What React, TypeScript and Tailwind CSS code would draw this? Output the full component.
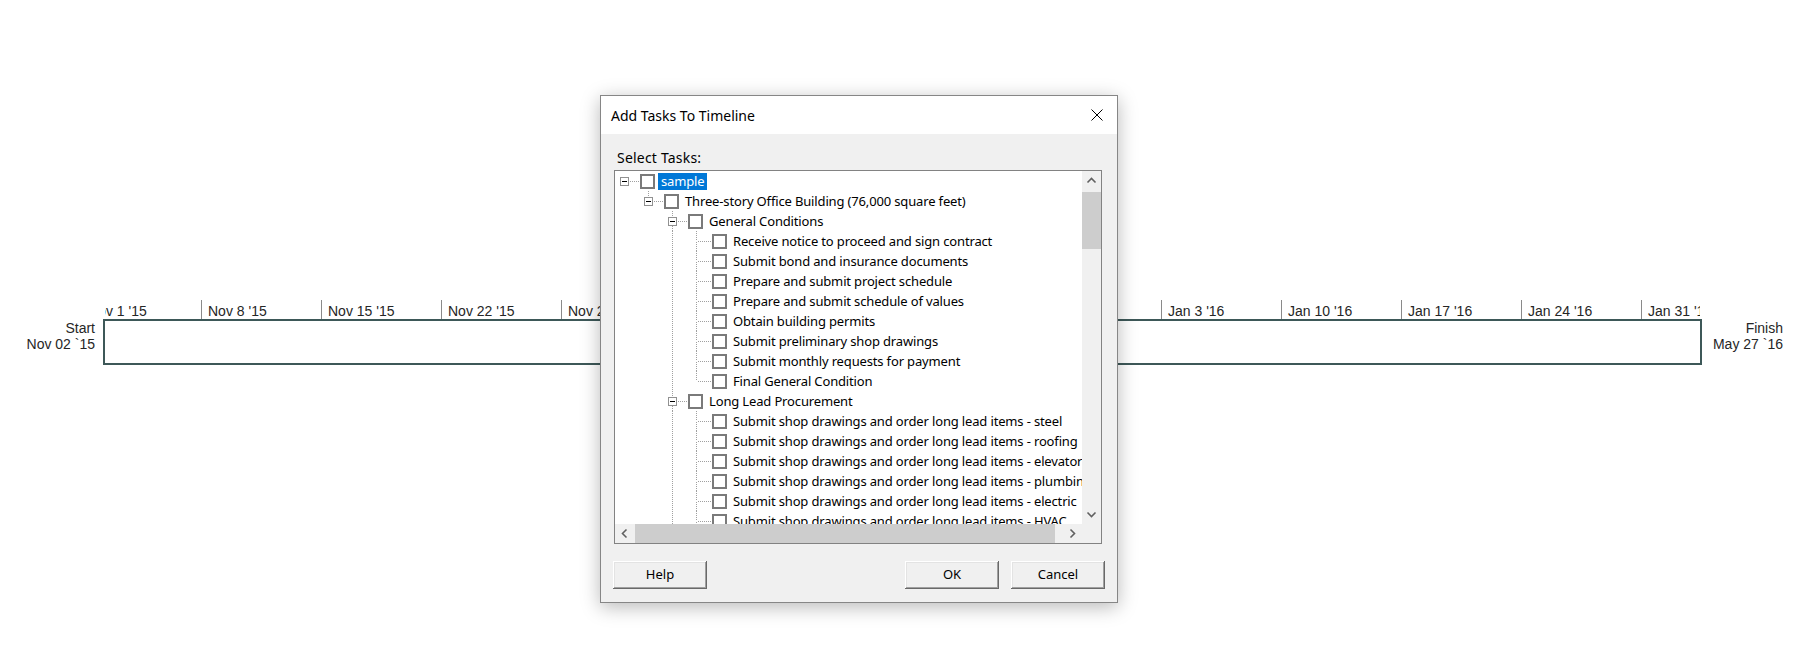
import React from 'react';

type Row = {
  level: number;
  text: string;
  exp?: boolean;
  last?: boolean;
  guides: boolean[];
  selected?: boolean;
};

const leaf = (text: string, last = false): Row => ({ level: 3, text, last, guides: [false, false, true] });

const rows: Row[] = [
  { level: 0, text: 'sample', exp: true, last: true, guides: [], selected: true },
  { level: 1, text: 'Three-story Office Building (76,000 square feet)', exp: true, last: true, guides: [false] },
  { level: 2, text: 'General Conditions', exp: true, guides: [false, false] },
  leaf('Receive notice to proceed and sign contract'),
  leaf('Submit bond and insurance documents'),
  leaf('Prepare and submit project schedule'),
  leaf('Prepare and submit schedule of values'),
  leaf('Obtain building permits'),
  leaf('Submit preliminary shop drawings'),
  leaf('Submit monthly requests for payment'),
  leaf('Final General Condition', true),
  { level: 2, text: 'Long Lead Procurement', exp: true, guides: [false, false] },
  leaf('Submit shop drawings and order long lead items - steel'),
  leaf('Submit shop drawings and order long lead items - roofing'),
  leaf('Submit shop drawings and order long lead items - elevator'),
  leaf('Submit shop drawings and order long lead items - plumbing'),
  leaf('Submit shop drawings and order long lead items - electric'),
  leaf('Submit shop drawings and order long lead items - HVAC'),
  leaf('Submit shop drawings and order long lead items - sitework', true),
];

const ticks = [
  "Nov 1 '15", "Nov 8 '15", "Nov 15 '15", "Nov 22 '15", "Nov 29 '15", "Dec 6 '15", "Dec 13 '15",
  "Dec 20 '15", "Dec 27 '15", "Jan 3 '16", "Jan 10 '16", "Jan 17 '16", "Jan 24 '16", "Jan 31 '16",
];

const DOT = '#a0a0a0';

function Guide({ on }: { on: boolean }) {
  return (
    <svg width="24" height="20" className="shrink-0">
      {on && <line x1="9.5" y1="0" x2="9.5" y2="20" stroke={DOT} strokeDasharray="1 1" />}
    </svg>
  );
}

function Branch({ row }: { row: Row }) {
  return (
    <svg width="24" height="20" className="shrink-0">
      {row.level > 0 && <line x1="9.5" y1="0" x2="9.5" y2="10" stroke={DOT} strokeDasharray="1 1" />}
      {!row.last && <line x1="9.5" y1="11" x2="9.5" y2="20" stroke={DOT} strokeDasharray="1 1" />}
      <line x1={row.exp ? 15 : 11} y1="10.5" x2="24" y2="10.5" stroke={DOT} strokeDasharray="1 1" />
      {row.exp && (
        <g>
          <rect x="5.5" y="6.5" width="8" height="8" fill="#fff" stroke="#919191" />
          <line x1="7" y1="10.5" x2="12" y2="10.5" stroke="#000" />
        </g>
      )}
    </svg>
  );
}

function TreeRow({ row }: { row: Row }) {
  return (
    <div className="flex h-[20px] items-center whitespace-nowrap">
      {row.guides.map((g, i) => (
        <Guide key={i} on={g} />
      ))}
      <Branch row={row} />
      <div className="ml-[1px] h-[15px] w-[15px] shrink-0 border-2 border-[#7a7a7a] bg-white" />
      <span
        className={`ml-[3px] px-[3px] leading-[17px] ${row.selected ? 'bg-[#0078d7] text-white' : 'text-black'}`}
      >
        {row.text}
      </span>
    </div>
  );
}

function Chevron({ dir }: { dir: 'up' | 'down' | 'left' | 'right' }) {
  const pts = {
    up: '5.5,11.5 9.5,7.5 13.5,11.5',
    down: '5.5,7.5 9.5,11.5 13.5,7.5',
    left: '11.5,5.5 7.5,9.5 11.5,13.5',
    right: '7.5,5.5 11.5,9.5 7.5,13.5',
  }[dir];
  return (
    <svg width="19" height="19" className="shrink-0">
      <polyline points={pts} fill="none" stroke="#606060" strokeWidth="1.6" />
    </svg>
  );
}

function Btn({ children, className = '' }: { children: React.ReactNode; className?: string }) {
  return (
    <button
      className={`flex h-[28px] w-[94px] items-center justify-center bg-[#f0f0f0] text-[13px] text-black shadow-[inset_-1px_-1px_#696969,inset_1px_1px_#ffffff,inset_-2px_-2px_#a0a0a0,inset_2px_2px_#e3e3e3] ${className}`}
    >
      {children}
    </button>
  );
}

export default function App() {
  return (
    <div className="relative h-[671px] w-[1803px] overflow-hidden bg-white">
      {/* timeline */}
      <div className="flex pt-[300px] font-['Liberation_Sans',Arial,sans-serif] text-[14px] leading-[16px] text-[#262626]">
        <div className="w-[103px] shrink-0 pr-[8px] pt-[20px] text-right">
          Start
          <br />
          Nov 02 `15
        </div>
        <div className="w-[1599px] shrink-0">
          <div className="mx-[2px] h-[19px] overflow-hidden">
            <div className="-ml-[24px] flex">
              {ticks.map((t) => (
                <div key={t} className="h-[19px] w-[120px] shrink-0 whitespace-nowrap border-l border-[#8a8a8a] pl-[6px] pt-[3px]">
                  {t}
                </div>
              ))}
            </div>
          </div>
          <div className="h-[46px] border-2 border-[#3d5858] bg-white" />
        </div>
        <div className="w-[81px] shrink-0 pt-[20px] text-right">
          Finish
          <br />
          May 27 `16
        </div>
      </div>

      {/* dialog */}
      <div className="absolute left-[600px] top-[95px] flex h-[508px] w-[518px] flex-col border border-[#868686] bg-[#f0f0f0] font-['Noto_Sans',sans-serif] text-black shadow-[0_4px_18px_rgba(0,0,0,0.28)]">
        <div className="flex h-[38px] shrink-0 items-center justify-between bg-white pl-[10px] pr-[14px]">
          <span className="text-[14px]">Add Tasks To Timeline</span>
          <svg width="12" height="12">
            <line x1="0.5" y1="0.5" x2="11.5" y2="11.5" stroke="#000" />
            <line x1="11.5" y1="0.5" x2="0.5" y2="11.5" stroke="#000" />
          </svg>
        </div>
        <div className="px-[12px] pt-[16px]">
          <div className="pl-[4px] text-[14px] leading-[16px] tracking-[0.2px]">Select Tasks:</div>
          <div className="ml-[1px] mt-[4px] grid h-[374px] w-[488px] grid-cols-[1fr_19px] grid-rows-[1fr_19px] border border-[#828282] bg-white">
            <div className="overflow-hidden text-[13px] tracking-[-0.15px]">
              {rows.map((r, i) => (
                <TreeRow key={i} row={r} />
              ))}
            </div>
            <div className="flex flex-col bg-[#f0f0f0]">
              <Chevron dir="up" />
              <div className="mt-[2px] h-[57px] bg-[#cdcdcd]" />
              <div className="flex-1" />
              <Chevron dir="down" />
            </div>
            <div className="flex bg-[#f0f0f0]">
              <Chevron dir="left" />
              <div className="ml-[1px] w-[420px] bg-[#cdcdcd]" />
              <div className="flex-1" />
              <Chevron dir="right" />
            </div>
            <div className="bg-[#f0f0f0]" />
          </div>
          <div className="mt-[17px] flex">
            <Btn>Help</Btn>
            <div className="flex-1" />
            <Btn>OK</Btn>
            <Btn className="ml-[12px]">Cancel</Btn>
          </div>
        </div>
      </div>
    </div>
  );
}
